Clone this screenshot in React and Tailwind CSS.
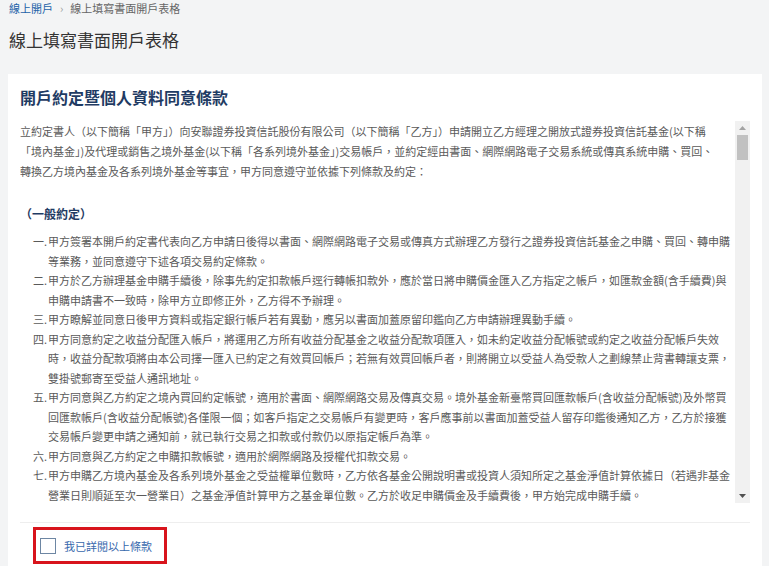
import React from "react";

const intro = [
  "立約定書人（以下簡稱「甲方」）向安聯證券投資信託股份有限公司（以下簡稱「乙方」）申請開立乙方經理之開放式證券投資信託基金(以下稱",
  "「境內基金」)及代理或銷售之境外基金(以下稱「各系列境外基金」)交易帳戶，並約定經由書面、網際網路電子交易系統或傳真系統申購、買回、",
  "轉換乙方境內基金及各系列境外基金等事宜，甲方同意遵守並依據下列條款及約定：",
];

const items = [
  ["一.", [
    "甲方簽署本開戶約定書代表向乙方申請日後得以書面、網際網路電子交易或傳真方式辦理乙方發行之證券投資信託基金之申購、買回、轉申購",
    "等業務，並同意遵守下述各項交易約定條款。",
  ]],
  ["二.", [
    "甲方於乙方辦理基金申購手續後，除事先約定扣款帳戶逕行轉帳扣款外，應於當日將申購價金匯入乙方指定之帳戶，如匯款金額(含手續費)與",
    "申購申請書不一致時，除甲方立即修正外，乙方得不予辦理。",
  ]],
  ["三.", [
    "甲方瞭解並同意日後甲方資料或指定銀行帳戶若有異動，應另以書面加蓋原留印鑑向乙方申請辦理異動手續。",
  ]],
  ["四.", [
    "甲方同意約定之收益分配匯入帳戶，將運用乙方所有收益分配基金之收益分配款項匯入，如未約定收益分配帳號或約定之收益分配帳戶失效",
    "時，收益分配款項將由本公司擇一匯入已約定之有效買回帳戶；若無有效買回帳戶者，則將開立以受益人為受款人之劃線禁止背書轉讓支票，",
    "雙掛號郵寄至受益人通訊地址。",
  ]],
  ["五.", [
    "甲方同意與乙方約定之境內買回約定帳號，適用於書面、網際網路交易及傳真交易。境外基金新臺幣買回匯款帳戶(含收益分配帳號)及外幣買",
    "回匯款帳戶(含收益分配帳號)各僅限一個；如客戶指定之交易帳戶有變更時，客戶應事前以書面加蓋受益人留存印鑑後通知乙方，乙方於接獲",
    "交易帳戶變更申請之通知前，就已執行交易之扣款或付款仍以原指定帳戶為準。",
  ]],
  ["六.", [
    "甲方同意與乙方約定之申購扣款帳號，適用於網際網路及授權代扣款交易。",
  ]],
  ["七.", [
    "甲方申購乙方境內基金及各系列境外基金之受益權單位數時，乙方依各基金公開說明書或投資人須知所定之基金淨值計算依據日（若遇非基金",
    "營業日則順延至次一營業日）之基金淨值計算甲方之基金單位數。乙方於收足申購價金及手續費後，甲方始完成申購手續。",
  ]],
  ["八.", [
    "甲方申請買回乙方境內基金及各系列境外基金之受益憑證時，應依各基金公開說明書或投資人須知所定之買回程序辦理，乙方於接獲申請後",
    "依規定計算買回價金，並匯入甲方約定之買回帳戶。",
  ]],
];

export default function App() {
  return (
    <div className="min-h-screen bg-[#f3f4f5] pl-2 font-['Noto_Sans_CJK_TC','Noto_Sans',sans-serif]">
      <div className="flex items-center h-4 text-[11px] leading-4">
        <span className="text-[#2462a8] ml-px">線上開戶</span>
        <span className="text-[#999] mx-[7px]">›</span>
        <span className="text-[#666]">線上填寫書面開戶表格</span>
      </div>
      <h1 className="mt-3 text-[17px] leading-6 text-[#333] ml-px">線上填寫書面開戶表格</h1>
      <div className="mt-[22px] w-[754px] bg-white px-3 pt-[11px] pb-6">
        <h2 className="text-[16px] leading-6 font-bold text-[#1f3b63]">開戶約定暨個人資料同意條款</h2>
        <div className="mt-3 flex h-[382px]">
          <div className="min-w-0 flex-1 overflow-y-scroll [scrollbar-width:none] text-[11px] leading-[19.5px] text-[#5a5a5a]">
            <div className="leading-5">
              {intro.map((l, i) => (
                <div key={i} className="whitespace-nowrap">{l}</div>
              ))}
            </div>
            <div className="mt-[23px] text-[12px] leading-5 font-semibold text-[#1f3b63]">（一般約定）</div>
            <div className="mt-2 pl-[13px]">
              {items.map(([n, lines]) => (
                <div key={n} className="flex">
                  <span className="w-[15px] shrink-0">{n}</span>
                  <div>
                    {lines.map((l, i) => (
                      <div key={i} className="whitespace-nowrap">{l}</div>
                    ))}
                  </div>
                </div>
              ))}
            </div>
          </div>
          <div className="flex w-[15px] shrink-0 flex-col bg-[#f1f1f1]">
            <div className="flex h-[14px] items-center justify-center">
              <svg width="7" height="4" viewBox="0 0 7 4"><path d="M0 4 L3.5 0 L7 4 Z" fill="#a3a3a3" /></svg>
            </div>
            <div className="mx-auto h-[25px] w-[11px] bg-[#c1c1c1]"></div>
            <div className="flex-1"></div>
            <div className="flex h-[14px] items-center justify-center">
              <svg width="7" height="4" viewBox="0 0 7 4"><path d="M0 0 L3.5 4 L7 0 Z" fill="#505050" /></svg>
            </div>
          </div>
        </div>
        <div className="mt-[19px] border-t border-[#eeeeee] pt-1">
          <div className="ml-[13px] flex h-[37px] w-[134px] items-center border-[3px] border-[#d8141c] pl-1">
            <span className="h-4 w-4 shrink-0 border border-[#6d86a3] bg-white"></span>
            <span className="ml-2 whitespace-nowrap text-[11px] leading-4 text-[#3768ad]">我已詳閱以上條款</span>
          </div>
        </div>
      </div>
    </div>
  );
}
